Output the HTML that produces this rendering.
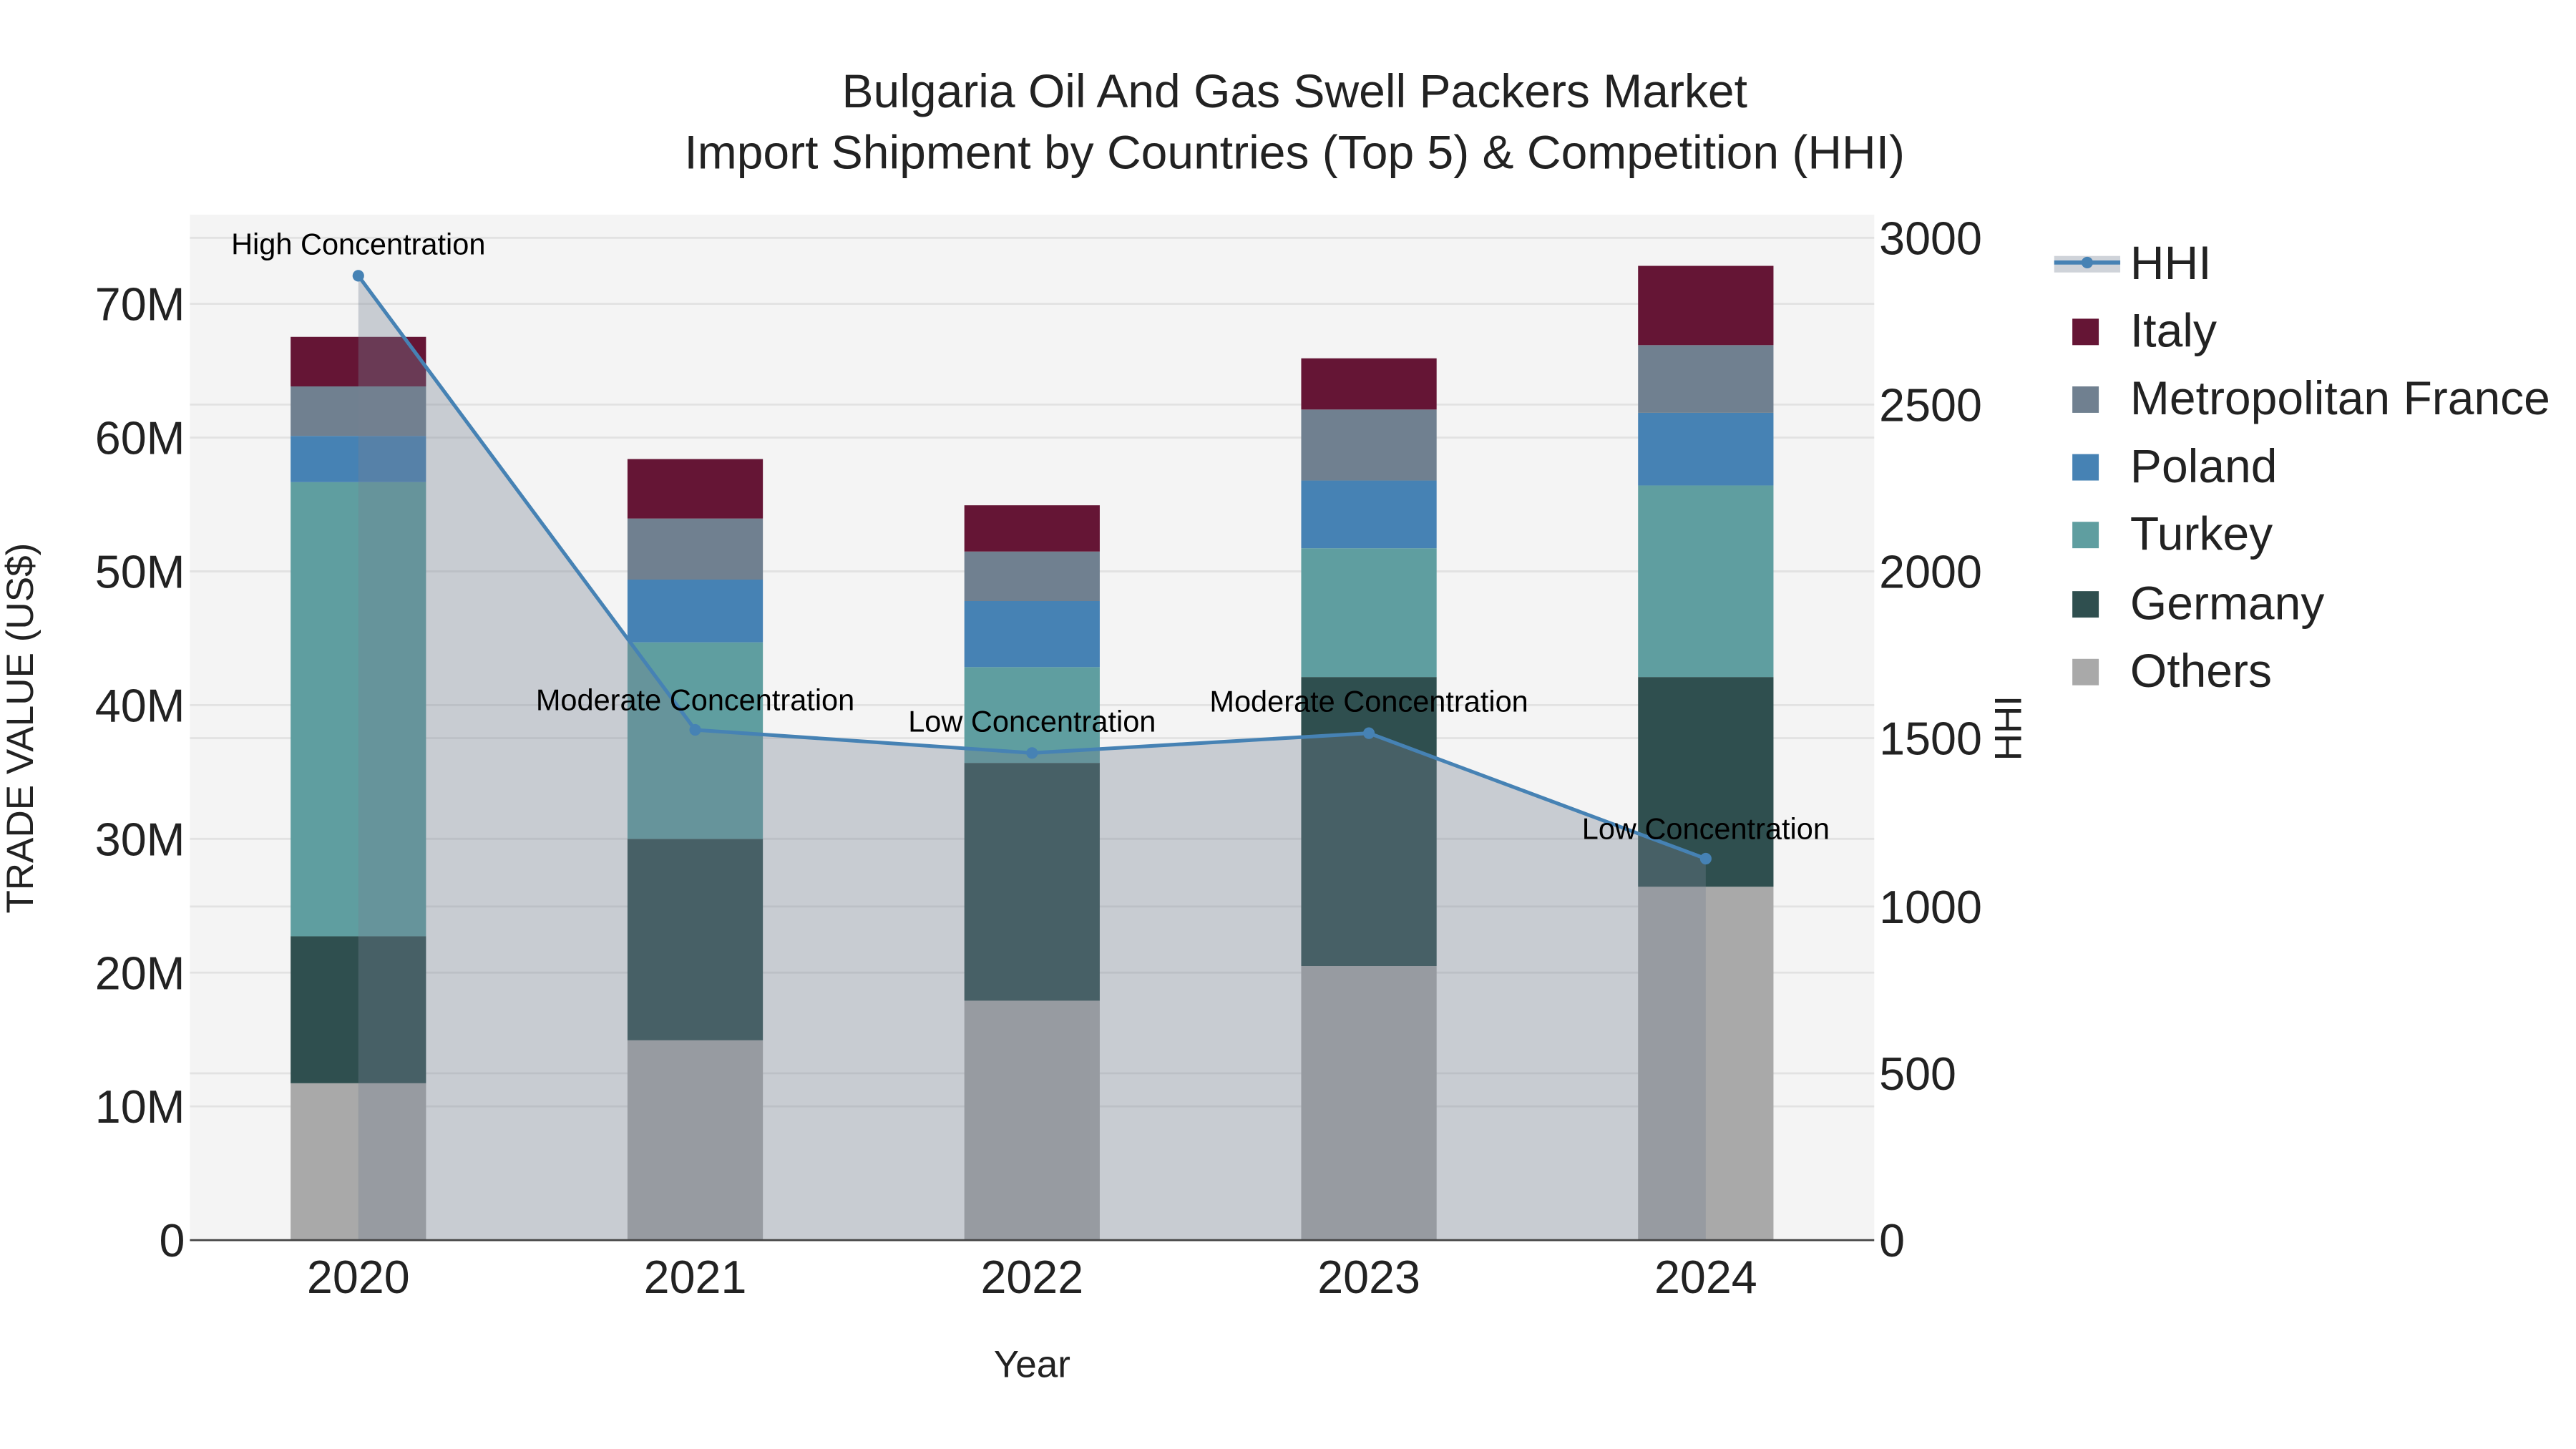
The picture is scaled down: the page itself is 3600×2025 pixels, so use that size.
<!DOCTYPE html>
<html><head><meta charset="utf-8"><style>html,body{margin:0;padding:0;background:#fff}svg{display:block}</style></head>
<body>
<svg width="3600" height="2025" viewBox="0 0 1560 877.5" xmlns="http://www.w3.org/2000/svg" font-family="Liberation Sans, sans-serif">
<rect width="1560" height="877.5" fill="#fff"/>
<rect x="115" y="130" width="1020" height="621" fill="#f4f4f4"/>
<g stroke="#e2e2e2" stroke-width="1.2">
<line x1="115" x2="1135" y1="670" y2="670"/><line x1="115" x2="1135" y1="589" y2="589"/>
<line x1="115" x2="1135" y1="508" y2="508"/><line x1="115" x2="1135" y1="427" y2="427"/>
<line x1="115" x2="1135" y1="346" y2="346"/><line x1="115" x2="1135" y1="265" y2="265"/>
<line x1="115" x2="1135" y1="184" y2="184"/>
<line x1="115" x2="1135" y1="650" y2="650"/><line x1="115" x2="1135" y1="549" y2="549"/>
<line x1="115" x2="1135" y1="447" y2="447"/><line x1="115" x2="1135" y1="346" y2="346"/>
<line x1="115" x2="1135" y1="245" y2="245"/><line x1="115" x2="1135" y1="144" y2="144"/>
</g>
<g>
<rect x="176" y="656" width="82" height="95" fill="#a9a9a9"/>
<rect x="176" y="567" width="82" height="89" fill="#2f4f4f"/>
<rect x="176" y="292" width="82" height="275" fill="#5f9ea0"/>
<rect x="176" y="264" width="82" height="28" fill="#4682b4"/>
<rect x="176" y="234" width="82" height="30" fill="#708090"/>
<rect x="176" y="204" width="82" height="30" fill="#651535"/>
<rect x="380" y="630" width="82" height="121" fill="#a9a9a9"/>
<rect x="380" y="508" width="82" height="122" fill="#2f4f4f"/>
<rect x="380" y="389" width="82" height="119" fill="#5f9ea0"/>
<rect x="380" y="351" width="82" height="38" fill="#4682b4"/>
<rect x="380" y="314" width="82" height="37" fill="#708090"/>
<rect x="380" y="278" width="82" height="36" fill="#651535"/>
<rect x="584" y="606" width="82" height="145" fill="#a9a9a9"/>
<rect x="584" y="462" width="82" height="144" fill="#2f4f4f"/>
<rect x="584" y="404" width="82" height="58" fill="#5f9ea0"/>
<rect x="584" y="364" width="82" height="40" fill="#4682b4"/>
<rect x="584" y="334" width="82" height="30" fill="#708090"/>
<rect x="584" y="306" width="82" height="28" fill="#651535"/>
<rect x="788" y="585" width="82" height="166" fill="#a9a9a9"/>
<rect x="788" y="410" width="82" height="175" fill="#2f4f4f"/>
<rect x="788" y="332" width="82" height="78" fill="#5f9ea0"/>
<rect x="788" y="291" width="82" height="41" fill="#4682b4"/>
<rect x="788" y="248" width="82" height="43" fill="#708090"/>
<rect x="788" y="217" width="82" height="31" fill="#651535"/>
<rect x="992" y="537" width="82" height="214" fill="#a9a9a9"/>
<rect x="992" y="410" width="82" height="127" fill="#2f4f4f"/>
<rect x="992" y="294" width="82" height="116" fill="#5f9ea0"/>
<rect x="992" y="250" width="82" height="44" fill="#4682b4"/>
<rect x="992" y="209" width="82" height="41" fill="#708090"/>
<rect x="992" y="161" width="82" height="48" fill="#651535"/>
</g>
<polygon points="217,751 217,167 421,442 625,456 829,444 1033,520 1033,751" fill="rgba(118,130,147,0.35)"/>
<polyline points="217,167 421,442 625,456 829,444 1033,520" fill="none" stroke="#4682b4" stroke-width="2.2"/>
<g fill="#4682b4"><circle cx="217" cy="167" r="3.5"/><circle cx="421" cy="442" r="3.5"/><circle cx="625" cy="456" r="3.5"/><circle cx="829" cy="444" r="3.5"/><circle cx="1033" cy="520" r="3.5"/></g>
<line x1="115" x2="1135" y1="751" y2="751" stroke="#444" stroke-width="1.2"/>
<g font-size="18" text-anchor="middle" fill="#000">
<text x="217" y="154">High Concentration</text>
<text x="421" y="430">Moderate Concentration</text>
<text x="625" y="443">Low Concentration</text>
<text x="829" y="431">Moderate Concentration</text>
<text x="1033" y="508">Low Concentration</text>
</g>
<g font-size="28" fill="#222" text-anchor="end">
<text x="112" y="761">0</text><text x="112" y="680">10M</text><text x="112" y="599">20M</text>
<text x="112" y="518">30M</text><text x="112" y="437">40M</text><text x="112" y="356">50M</text>
<text x="112" y="275">60M</text><text x="112" y="194">70M</text>
</g>
<g font-size="28" fill="#222">
<text x="1138" y="761">0</text><text x="1138" y="660">500</text><text x="1138" y="559">1000</text>
<text x="1138" y="457">1500</text><text x="1138" y="356">2000</text><text x="1138" y="255">2500</text>
<text x="1138" y="154">3000</text>
</g>
<g font-size="28" fill="#222" text-anchor="middle">
<text x="217" y="783">2020</text><text x="421" y="783">2021</text><text x="625" y="783">2022</text>
<text x="829" y="783">2023</text><text x="1033" y="783">2024</text>
</g>
<text x="625" y="834" font-size="23" text-anchor="middle" fill="#222">Year</text>
<text transform="translate(20,441) rotate(-90)" font-size="23" text-anchor="middle" fill="#222">TRADE VALUE (US$)</text>
<text transform="translate(1224,441) rotate(-90)" font-size="23" text-anchor="middle" fill="#222">HHI</text>
<g font-size="28.6" text-anchor="middle" fill="#222">
<text x="784" y="65">Bulgaria Oil And Gas Swell Packers Market</text>
<text x="784" y="102">Import Shipment by Countries (Top 5) &amp; Competition (HHI)</text>
</g>
<rect x="1244" y="155" width="40" height="10" fill="rgba(118,130,147,0.35)"/>
<line x1="1244" x2="1284" y1="159" y2="159" stroke="#4682b4" stroke-width="2.5"/>
<circle cx="1264" cy="159" r="3.5" fill="#4682b4"/>
<g>
<rect x="1255" y="193" width="16" height="16" fill="#651535"/>
<rect x="1255" y="234" width="16" height="16" fill="#708090"/>
<rect x="1255" y="275" width="16" height="16" fill="#4682b4"/>
<rect x="1255" y="316" width="16" height="16" fill="#5f9ea0"/>
<rect x="1255" y="358" width="16" height="16" fill="#2f4f4f"/>
<rect x="1255" y="399" width="16" height="16" fill="#a9a9a9"/>
</g>
<g font-size="28.6" fill="#222">
<text x="1290" y="169">HHI</text>
<text x="1290" y="210">Italy</text>
<text x="1290" y="251">Metropolitan France</text>
<text x="1290" y="292">Poland</text>
<text x="1290" y="333">Turkey</text>
<text x="1290" y="375">Germany</text>
<text x="1290" y="416">Others</text>
</g>
</svg>
</body></html>
